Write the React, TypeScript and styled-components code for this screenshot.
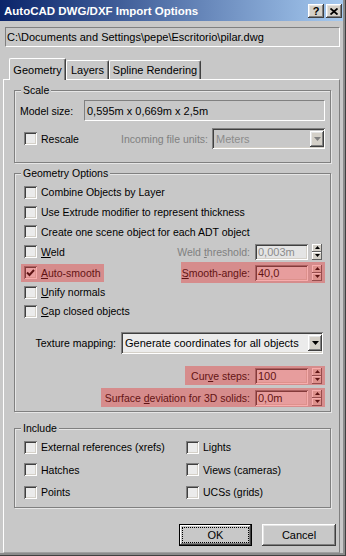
import styled, { createGlobalStyle, css } from "styled-components";

const GlobalStyle = createGlobalStyle`
  html, body {
    margin: 0;
    padding: 0;
    background: #c8c8c8;
  }
  body {
    font-family: "Liberation Sans", Arial, sans-serif;
    font-size: 10.5px;
    color: #000;
  }
`;

const raised = css`
  background: #d4d0c8;
  box-shadow: inset -1px -1px 0 #404040, inset 1px 1px 0 #ffffff,
    inset -2px -2px 0 #808080, inset 2px 2px 0 #e4e4e4;
`;

const sunken = css`
  box-shadow: inset 1px 1px 0 #808080, inset -1px -1px 0 #ffffff,
    inset 2px 2px 0 #404040, inset -2px -2px 0 #d4d0c8;
`;

const highlight = css`
  position: relative;
  &::after {
    content: "";
    position: absolute;
    inset: 0;
    background: rgba(235, 50, 50, 0.4);
    pointer-events: none;
  }
`;

function UpArrow({ color = "#000" }: { color?: string }) {
  return (
    <svg width="5" height="3" viewBox="0 0 5 3">
      <polygon points="0,3 5,3 2.5,0" fill={color} />
    </svg>
  );
}

function DownArrow({ w = 5, h = 3, color = "#000" }: { w?: number; h?: number; color?: string }) {
  return (
    <svg width={w} height={h} viewBox={`0 0 ${w} ${h}`}>
      <polygon points={`0,0 ${w},0 ${w / 2},${h}`} fill={color} />
    </svg>
  );
}

function CheckMark() {
  return (
    <svg width="9" height="8" viewBox="0 0 9 8">
      <polyline points="1,3.5 3.5,6 8,1" fill="none" stroke="#000" strokeWidth="2" />
    </svg>
  );
}

function Check({ checked }: { checked?: boolean }) {
  return <CheckBox>{checked && <CheckMark />}</CheckBox>;
}

function SpinControl({ value, disabled }: { value: string; disabled?: boolean }) {
  return (
    <>
      <SpinField $disabled={disabled}>{value}</SpinField>
      <Spinner>
        <SpinHalf>
          <UpArrow />
        </SpinHalf>
        <SpinHalf>
          <DownArrow />
        </SpinHalf>
      </Spinner>
    </>
  );
}

export default function App() {
  return (
    <>
      <GlobalStyle />
      <Window>
        <TitleBar>
          <TitleText>AutoCAD DWG/DXF Import Options</TitleText>
          <TitleButtons>
            <TitleButton>?</TitleButton>
            <TitleButton>
              <svg width="8" height="7" viewBox="0 0 8 7">
                <path d="M0.5 0.5 L7.5 6.5 M7.5 0.5 L0.5 6.5" stroke="#000" strokeWidth="1.8" />
              </svg>
            </TitleButton>
          </TitleButtons>
        </TitleBar>

        <PathField>C:\Documents and Settings\pepe\Escritorio\pilar.dwg</PathField>

        <TabStrip>
          <Tab $active $width={57}>Geometry</Tab>
          <Tab $width={43}>Layers</Tab>
          <Tab $width={92}>Spline Rendering</Tab>
        </TabStrip>

        <Panel>
          <GroupBox $pad="9px 5px 13px 0">
            <Legend>Scale</Legend>
            <ModelRow>
              <ModelLabel>Model size:</ModelLabel>
              <StaticField>0,595m x 0,669m x 2,5m</StaticField>
            </ModelRow>
            <RescaleRow>
              <CheckItem>
                <Check />
                Rescale
              </CheckItem>
              <UnitsGroup>
                Incoming file units:
                <ComboBox $width={113} $height={21} $disabled>
                  Meters
                  <ArrowButton>
                    <DownArrow w={7} h={4} color="#808080" />
                  </ArrowButton>
                </ComboBox>
              </UnitsGroup>
            </RescaleRow>
          </GroupBox>

          <GroupBox $mt={10} $pad="8px 5px 4px 0">
            <Legend>Geometry Options</Legend>
            <OptionRow $h={20}>
              <CheckItem>
                <Check />
                Combine Objects by Layer
              </CheckItem>
            </OptionRow>
            <OptionRow $h={20}>
              <CheckItem>
                <Check />
                Use Extrude modifier to represent thickness
              </CheckItem>
            </OptionRow>
            <OptionRow $h={19}>
              <CheckItem>
                <Check />
                Create one scene object for each ADT object
              </CheckItem>
            </OptionRow>
            <OptionRow $h={21}>
              <CheckItem>
                <Check />
                <span>
                  <u>W</u>eld
                </span>
              </CheckItem>
              <ParamBox $width={150}>
                <ParamLabel $disabled>
                  Weld <u>t</u>hreshold:
                </ParamLabel>
                <SpinControl value="0,003m" disabled />
              </ParamBox>
            </OptionRow>
            <OptionRow $h={21}>
              <CheckItem $hl>
                <Check checked />
                <span>
                  <u>A</u>uto-smooth
                </span>
              </CheckItem>
              <ParamBox $width={144} $hl>
                <ParamLabel>
                  <u>S</u>mooth-angle:
                </ParamLabel>
                <SpinControl value="40,0" />
              </ParamBox>
            </OptionRow>
            <OptionRow $h={18}>
              <CheckItem>
                <Check />
                <span>
                  <u>U</u>nify normals
                </span>
              </CheckItem>
            </OptionRow>
            <OptionRow $h={20}>
              <CheckItem>
                <Check />
                <span>
                  <u>C</u>ap closed objects
                </span>
              </CheckItem>
            </OptionRow>

            <TextureRow>
              Texture mapping:
              <ComboBox $width={202} $height={22}>
                Generate coordinates for all objects
                <ArrowButton>
                  <DownArrow w={7} h={4} />
                </ArrowButton>
              </ComboBox>
            </TextureRow>

            <OptionRow $h={19} $mt={12} $end>
              <ParamBox $width={140} $hl>
                <ParamLabel>
                  Cur<u>v</u>e steps:
                </ParamLabel>
                <SpinControl value="100" />
              </ParamBox>
            </OptionRow>
            <OptionRow $h={19} $mt={3} $end>
              <ParamBox $width={224} $hl>
                <ParamLabel>
                  Surface <u>d</u>eviation for 3D solids:
                </ParamLabel>
                <SpinControl value="0,0m" />
              </ParamBox>
            </OptionRow>
          </GroupBox>

          <GroupBox $mt={16} $pad="7px 5px 4px 0">
            <Legend>Include</Legend>
            <IncludeGrid>
              <CheckItem>
                <Check />
                External references (xrefs)
              </CheckItem>
              <CheckItem>
                <Check />
                Lights
              </CheckItem>
              <CheckItem>
                <Check />
                Hatches
              </CheckItem>
              <CheckItem>
                <Check />
                Views (cameras)
              </CheckItem>
              <CheckItem>
                <Check />
                Points
              </CheckItem>
              <CheckItem>
                <Check />
                UCSs (grids)
              </CheckItem>
            </IncludeGrid>
          </GroupBox>

          <ButtonRow>
            <PushButton $default $width={73}>OK</PushButton>
            <PushButton $width={74}>Cancel</PushButton>
          </ButtonRow>
        </Panel>
      </Window>
    </>
  );
}

const Window = styled.div`
  width: 346px;
  height: 556px;
  box-sizing: border-box;
  padding: 0 3px 3px 0;
  background: #c8c8c8;
  box-shadow: inset -1px -1px 0 #404040, inset -3px -3px 0 #8c8c8c;
  display: flex;
  flex-direction: column;
`;

const TitleBar = styled.div`
  height: 21px;
  flex: none;
  display: flex;
  align-items: center;
  justify-content: space-between;
  padding: 0 1px 0 4px;
  background: linear-gradient(to right, #0a246a, #a6caf0);
`;

const TitleText = styled.span`
  color: #fff;
  font-weight: bold;
  font-size: 11.5px;
`;

const TitleButtons = styled.div`
  display: flex;
  gap: 2px;
`;

const TitleButton = styled.div`
  width: 16px;
  height: 14px;
  box-sizing: border-box;
  display: flex;
  align-items: center;
  justify-content: center;
  font-weight: bold;
  font-size: 11px;
  padding-top: 1px;
  ${raised}
`;

const PathField = styled.div`
  margin: 6px 0 0 5px;
  width: 335px;
  height: 20px;
  flex: none;
  box-sizing: border-box;
  border-top: 1px solid #808080;
  border-left: 1px solid #808080;
  border-bottom: 1px solid #fff;
  border-right: 1px solid #fff;
  padding-left: 1px;
  display: flex;
  align-items: center;
  font-size: 11px;
`;

const TabStrip = styled.div`
  margin-top: 11px;
  height: 21px;
  flex: none;
  display: flex;
  align-items: flex-end;
  padding-left: 9px;
  position: relative;
  z-index: 1;
`;

const Tab = styled.div<{ $active?: boolean; $width: number }>`
  width: ${(p) => p.$width}px;
  height: ${(p) => (p.$active ? 22 : 19)}px;
  margin-bottom: ${(p) => (p.$active ? -1 : 0)}px;
  box-sizing: border-box;
  background: #c8c8c8;
  border-top: 1px solid #fff;
  border-left: 1px solid #fff;
  border-right: 1px solid #404040;
  border-radius: 2px 2px 0 0;
  box-shadow: inset -1px 0 0 #808080;
  display: flex;
  align-items: center;
  justify-content: center;
  font-size: 11px;
`;

const Panel = styled.div`
  flex: 1;
  margin-left: 3px;
  width: 337px;
  box-sizing: border-box;
  border-top: 1px solid #fff;
  border-left: 1px solid #fff;
  border-right: 1px solid #808080;
  border-bottom: 1px solid #a0a0a0;
  padding: 10px 0 0 10px;
  display: flex;
  flex-direction: column;
`;

const GroupBox = styled.div<{ $mt?: number; $pad: string }>`
  position: relative;
  width: 317px;
  box-sizing: border-box;
  margin-top: ${(p) => p.$mt ?? 0}px;
  padding: ${(p) => p.$pad};
  border: 1px solid #808080;
  box-shadow: inset 1px 1px 0 #e6e6e6, 1px 1px 0 #e6e6e6;
`;

const Legend = styled.span`
  position: absolute;
  top: -7px;
  left: 6px;
  padding: 0 2px;
  line-height: 13px;
  background: #c8c8c8;
`;

const ModelRow = styled.div`
  height: 21px;
  display: flex;
  align-items: center;
  padding-left: 5px;
`;

const ModelLabel = styled.span`
  width: 64px;
`;

const StaticField = styled.div`
  width: 241px;
  height: 21px;
  box-sizing: border-box;
  border-top: 1px solid #808080;
  border-left: 1px solid #808080;
  border-bottom: 1px solid #fff;
  border-right: 1px solid #fff;
  padding-left: 2px;
  display: flex;
  align-items: center;
  font-size: 11px;
`;

const RescaleRow = styled.div`
  margin-top: 7px;
  height: 21px;
  display: flex;
  align-items: center;
  padding-left: 9px;
`;

const UnitsGroup = styled.div`
  margin-left: auto;
  display: flex;
  align-items: center;
  gap: 4px;
  color: #808080;
`;

const CheckBox = styled.span`
  width: 13px;
  height: 13px;
  flex: none;
  box-sizing: border-box;
  display: inline-flex;
  align-items: center;
  justify-content: center;
  background: #ebebeb;
  ${sunken}
`;

const CheckItem = styled.span<{ $hl?: boolean }>`
  display: inline-flex;
  align-items: center;
  gap: 4px;
  white-space: nowrap;
  ${(p) =>
    p.$hl &&
    css`
      height: 18px;
      margin-left: -3px;
      padding: 0 3px;
      ${highlight}
    `}
`;

const ComboBox = styled.div<{ $width: number; $height: number; $disabled?: boolean }>`
  width: ${(p) => p.$width}px;
  height: ${(p) => p.$height}px;
  box-sizing: border-box;
  display: flex;
  align-items: center;
  padding: 0 1px 0 4px;
  white-space: nowrap;
  background: ${(p) => (p.$disabled ? "#c8c8c8" : "#ebebeb")};
  color: ${(p) => (p.$disabled ? "#8c8c8c" : "#000")};
  font-size: 11px;
  ${sunken}
`;

const ArrowButton = styled.span`
  margin-left: auto;
  width: 14px;
  height: 16px;
  box-sizing: border-box;
  display: flex;
  align-items: center;
  justify-content: center;
  ${raised}
`;

const OptionRow = styled.div<{ $h: number; $mt?: number; $end?: boolean }>`
  height: ${(p) => p.$h}px;
  margin-top: ${(p) => p.$mt ?? 0}px;
  display: flex;
  align-items: center;
  justify-content: ${(p) => (p.$end ? "flex-end" : "space-between")};
  padding-left: 9px;
`;

const ParamBox = styled.div<{ $width: number; $hl?: boolean }>`
  width: ${(p) => p.$width}px;
  height: 100%;
  box-sizing: border-box;
  display: flex;
  align-items: center;
  justify-content: flex-end;
  padding-right: 3px;
  white-space: nowrap;
  ${(p) => p.$hl && highlight}
`;

const ParamLabel = styled.span<{ $disabled?: boolean }>`
  margin-right: 5px;
  color: ${(p) => (p.$disabled ? "#808080" : "#000")};
`;

const SpinField = styled.div<{ $disabled?: boolean }>`
  width: 53px;
  height: 16px;
  box-sizing: border-box;
  display: flex;
  align-items: center;
  padding-left: 3px;
  font-size: 11px;
  background: #e4e4e4;
  color: ${(p) => (p.$disabled ? "#8c8c8c" : "#000")};
  ${sunken}
`;

const Spinner = styled.div`
  width: 10px;
  height: 16px;
  margin-left: 4px;
  display: flex;
  flex-direction: column;
`;

const SpinHalf = styled.div`
  flex: 1;
  display: flex;
  align-items: center;
  justify-content: center;
  background: #d4d0c8;
  box-shadow: inset -1px -1px 0 #606060, inset 1px 1px 0 #ffffff;
`;

const TextureRow = styled.div`
  margin-top: 11px;
  height: 22px;
  display: flex;
  align-items: center;
  justify-content: flex-end;
  gap: 5px;
  padding-right: 2px;
  white-space: nowrap;
`;

const IncludeGrid = styled.div`
  display: grid;
  grid-template-columns: 162px 1fr;
  grid-template-rows: 22px 23px 22px;
  align-items: center;
  padding-left: 9px;
`;

const ButtonRow = styled.div`
  margin-top: 16px;
  display: flex;
  justify-content: flex-end;
  gap: 10px;
  padding-right: 3px;
`;

const PushButton = styled.div<{ $default?: boolean; $width: number }>`
  position: relative;
  width: ${(p) => p.$width}px;
  height: 22px;
  box-sizing: border-box;
  display: flex;
  align-items: center;
  justify-content: center;
  font-size: 11px;
  background: #c8c8c8;
  ${(p) =>
    p.$default
      ? css`
          border: 1px solid #000;
          box-shadow: inset -1px -1px 0 #404040, inset 1px 1px 0 #ffffff,
            inset -2px -2px 0 #808080;
          &::after {
            content: "";
            position: absolute;
            inset: 2px;
            border: 1px dotted #000;
          }
        `
      : css`
          box-shadow: inset -1px -1px 0 #404040, inset 1px 1px 0 #ffffff,
            inset -2px -2px 0 #808080, inset 2px 2px 0 #e4e4e4;
        `}
`;
